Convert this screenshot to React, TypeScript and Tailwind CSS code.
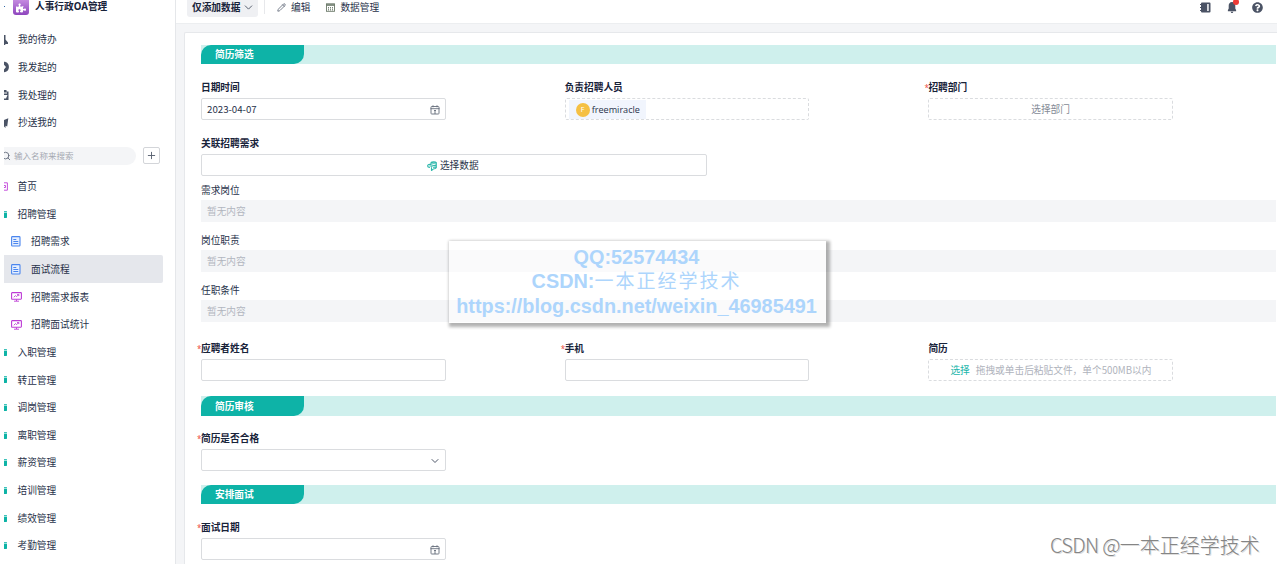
import React from 'react';
import { ChevronDown, Pencil, Plus, Search } from 'lucide-react';
import { FaPuzzlePiece, FaQuestionCircle } from 'react-icons/fa';

interface MenuItem {
  label: string;
  type: 'home' | 'folder' | 'form' | 'report';
  active?: boolean;
}

const quickLinks = ['我的待办', '我发起的', '我处理的', '抄送我的'];

const menuItems: MenuItem[] = [
  { label: '首页', type: 'home' },
  { label: '招聘管理', type: 'folder' },
  { label: '招聘需求', type: 'form' },
  { label: '面试流程', type: 'form', active: true },
  { label: '招聘需求报表', type: 'report' },
  { label: '招聘面试统计', type: 'report' },
  { label: '入职管理', type: 'folder' },
  { label: '转正管理', type: 'folder' },
  { label: '调岗管理', type: 'folder' },
  { label: '离职管理', type: 'folder' },
  { label: '薪资管理', type: 'folder' },
  { label: '培训管理', type: 'folder' },
  { label: '绩效管理', type: 'folder' },
  { label: '考勤管理', type: 'folder' },
];

const QuickIcon = ({ index }: { index: number }) => (
  <svg className="h-3 w-[5px] shrink-0 text-[#4a5365]" viewBox="0 0 5 12" fill="currentColor">
    {index === 0 && <path d="M0 1h1.500v4.500L4 8.500V10H1.300v1H0z" />}
    {index === 1 && <path d="M0 .8c3 0 4.900 2.200 4.900 5.200S3 11.200 0 11.200V8.500L2 6 0 3.800z" />}
    {index === 2 && <path d="M0 1h2.500v1.500h2V11H0V9.500h2L3.500 6H0V4.500h3V3.500H0z" />}
    {index === 3 && <path d="M4.300 1.200 3.200 9.500 1.500 8.800V11L0 9.500V3z" />}
  </svg>
);

const MenuIcon = ({ type }: { type: MenuItem['type'] }) => {
  if (type === 'home') {
    return (
      <svg className="h-[9px] w-1 shrink-0" viewBox="0 0 4 9" fill="none" stroke="#c653dc">
        <path d="M0 .8h3.400v7.400H0M0 3.500h1.500v2H0" />
      </svg>
    );
  }
  if (type === 'folder') {
    return (
      <svg className="h-[7px] w-[3px] shrink-0" viewBox="0 0 3 7">
        <path d="M0 0h2.600L3 .6v1H0z" fill="#3cc3ba" />
        <path d="M0 2h3v4.500l-.5.5H0z" fill="#0db3a6" />
      </svg>
    );
  }
  if (type === 'form') {
    return (
      <svg className="h-[11px] w-[10px] shrink-0" viewBox="0 0 10 11" fill="none" stroke="#4b86ee">
        <rect x=".6" y=".6" width="8.400" height="9.400" rx=".8" fill="#e7f0ff" strokeWidth="1.100" />
        <path d="M2.300 3.500h3M2.300 5.500h5M2.300 7.500h5" />
      </svg>
    );
  }
  return (
    <svg className="h-[10px] w-[11px] shrink-0" viewBox="0 0 11 10" fill="none" stroke="#bd3bd5">
      <rect x=".6" y=".6" width="9.800" height="6.600" rx=".6" strokeWidth="1.100" />
      <path d="m2.800 5.200 1.700-1.600 1.200 1 2-2M6 2.600h1.800v1.500M5.500 7.500V9M3 9.200h5" strokeWidth=".9" />
    </svg>
  );
};

const DateIcon = () => (
  <svg className="h-[10px] w-[10px]" viewBox="0 0 10 10" fill="none" stroke="#656d7b" strokeWidth=".9">
    <rect x="1" y="1.500" width="8" height="7.500" rx=".7" />
    <path d="M.5 3.700h9M3 .3v2M7 .3v2M4 5.500h2M5 5.500V9" />
  </svg>
);

const Banner = ({ title, className }: { title: string; className?: string }) => (
  <div className={`mr-px flex bg-[#cff0ed] ${className ?? ''}`}>
    <div className="flex w-[103px] items-center rounded-tl-[10px] rounded-br-[10px] bg-[#0eb3a7] pt-px pl-3.5 font-bold text-white">
      {title}
    </div>
  </div>
);

interface FieldProps {
  label: string;
  required?: boolean;
  dashed?: boolean;
  className?: string;
  children?: React.ReactNode;
}

const Field = ({ label, required, dashed, className, children }: FieldProps) => (
  <div className={`shrink-0 ${className ?? 'w-[244.500px]'}`}>
    <div className={`flex h-[21px] items-center pt-px font-bold text-[#18233a] ${required ? '-ml-1' : ''}`}>
      {required && <span className="w-1 text-[8px] font-normal text-[#ee5045]">*</span>}
      {label}
    </div>
    <div className={`flex h-[22px] items-center rounded-xs border border-[#dadcdf] pt-px ${dashed ? 'border-dashed' : ''}`}>
      {children}
    </div>
  </div>
);

const EmptyField = ({ label }: { label: string }) => (
  <div className="mr-px">
    <div className="flex h-5 items-center pt-px">{label}</div>
    <div className="flex h-[22px] items-center bg-[#f4f5f7] pt-px pl-1.5 text-[#b2b6bf]">暂无内容</div>
  </div>
);

const Sidebar = () => (
  <aside className="w-44 shrink-0 border-r border-[#e5e7ea] pl-1">
    <div className="overflow-hidden">
      <div className="flex h-[15px] items-start">
        <span className="mt-1.5 h-px w-px bg-[#3269a8]" />
        <div className="ml-2 flex h-[15px] w-4 items-center justify-center rounded-b-[3px] bg-linear-to-b from-[#c58be0] to-[#8e44bd]">
          <FaPuzzlePiece className="h-2.5 w-2.5 text-white" />
        </div>
        <span className="ml-1.5 text-[9.700px] leading-[14px] font-bold text-[#18233a]">人事行政OA管理</span>
      </div>

      <div className="mt-[11px]">
        {quickLinks.map((label, index) => (
          <div key={label} className="flex h-[27.65px] items-center">
            <QuickIcon index={index} />
            <span className="ml-[9px] pt-px">{label}</span>
          </div>
        ))}
      </div>

      {/* Search */}
      <div className="mt-[10px] flex h-[18px] items-center">
        <div className="flex h-[18px] w-[132px] items-center rounded-r-full bg-[#f4f5f7] text-[8.500px] text-[#a5a9b2]">
          <Search className="-ml-[3px] h-[10px] w-[10px] shrink-0 text-[#5a6373]" />
          <span className="ml-[3px] pt-px">输入名称来搜索</span>
        </div>
        <button className="ml-[7px] flex h-[17px] w-[17px] items-center justify-center rounded-xs border border-[#d3d5d9]">
          <Plus className="h-[11px] w-[11px] text-[#555e6d]" strokeWidth={2} />
        </button>
      </div>

      <div className="mt-2 w-[159px]">
        {menuItems.map((item) => {
          const nested = item.type === 'form' || item.type === 'report';
          return (
            <div
              key={item.label}
              className={`flex h-[27.65px] items-center rounded-r-xs ${item.active ? 'bg-[#e5e7ec]' : ''}`}
            >
              <div className={`flex shrink-0 ${nested ? 'w-[27px] pl-[7px]' : 'w-[13.500px]'}`}>
                <MenuIcon type={item.type} />
              </div>
              <span className="pt-px">{item.label}</span>
            </div>
          );
        })}
      </div>
    </div>
  </aside>
);

const Toolbar = () => (
  <header className="flex h-6 shrink-0 items-start border-b border-[#eceef0] bg-white pl-[11px]">
    <div className="flex h-[17px] w-[71px] items-center rounded-b-[3px] bg-[#eff0f3] pb-[2px] pl-[5px] font-bold text-[#18233a]">
      仅添加数据
      <ChevronDown className="ml-[2px] h-[13px] w-[13px] shrink-0 text-[#555e6d]" strokeWidth={1.8} />
    </div>
    <span className="ml-1.5 h-3.5 w-px bg-[#e7e8eb]" />
    <div className="ml-3 flex h-[15px] items-center">
      <Pencil className="mr-[5px] h-[9px] w-[9px] text-[#4f586a]" />
      编辑
    </div>
    <div className="ml-4 flex h-[15px] items-center">
      <svg className="mr-[5px] h-[9px] w-[9px]" viewBox="0 0 9 9" fill="none" stroke="#6a7868" strokeWidth=".9">
        <rect x=".5" y=".8" width="8" height="7.500" />
        <path d="M.5 2h8" strokeWidth="1.600" />
        <path d="M2.500 4v3.500M4.500 4v3.500M6.500 4v3.500" strokeDasharray="1.500 .6" />
      </svg>
      数据管理
    </div>
    <div className="ml-auto flex h-[15px] items-center gap-[15.500px] pr-[14px]">
      <svg className="h-[11px] w-[11px]" viewBox="0 0 11 11" fill="#4b5365">
        <path fillRule="evenodd" d="M2 .5h7.500q1 0 1 1v8q0 1-1 1H2q-1 0-1-1v-8q0-1 1-1zM7.200 2v7h1.500V2z" />
        <path d="M0 2h1.500v1H0zM0 5h1.500v1H0zM0 8h1.500v1H0z" />
      </svg>
      <div className="relative">
        <svg className="h-[11px] w-[10px]" viewBox="0 0 10 12" fill="#4b5365">
          <path d="M5 0c-2.500 0-3.600 2-3.600 4v3L.5 9v1h9V9l-.9-2V4C8.600 2 7.500 0 5 0zM3.500 10.500h3L5.700 12H4.300z" />
        </svg>
        <span className="absolute -top-[3px] left-[6px] h-[6px] w-[6px] rounded-full bg-[#ee3a36]" />
      </div>
      <FaQuestionCircle className="h-[11px] w-[11px] text-[#4b5365]" />
    </div>
  </header>
);

export default function App() {
  return (
    <div className="relative flex h-[564px] w-[1277px] overflow-hidden bg-white font-['Noto_Sans','Noto_Sans_CJK_SC',sans-serif] text-[9.700px] leading-none whitespace-nowrap text-[#28324a]">
      <Sidebar />

      <main className="flex min-w-0 flex-1 flex-col bg-[#f4f5f7]">
        <Toolbar />
        <div className="mt-2 ml-2 flex-1 rounded-tl-xs border-t border-l border-[#e6e8eb] bg-white pt-3 pl-4">
          <Banner title="简历筛选" className="h-[19px]" />

          <div className="mt-[13px] flex gap-[119.200px]">
            <Field label="日期时间">
              <span className="pl-[5px] font-['Noto_Sans_CJK_SC',sans-serif]">2023-04-07</span>
              <span className="mr-[5px] ml-auto"><DateIcon /></span>
            </Field>
            <Field label="负责招聘人员" dashed>
              <div className="ml-[3px] flex h-[19px] w-[77px] items-center bg-[#f1f5fd] pl-[7px]">
                <span className="mr-[2px] flex h-3.5 w-3.5 items-center justify-center rounded-full bg-[#f5c043] text-[7px] text-white">F</span>
                <span className="font-['Open_Sans',sans-serif] text-[9.100px]">freemiracle</span>
              </div>
            </Field>
            <Field label="招聘部门" required dashed>
              <span className="w-full text-center text-[#858b96]">选择部门</span>
            </Field>
          </div>

          <Field label="关联招聘需求" className="mt-[13px] w-[505.500px]">
            <div className="flex w-full items-center justify-center gap-[3px] pr-0.5">
              <svg className="h-[10px] w-[10px]" viewBox="0 0 10 10" fill="none" stroke="#2eb8ac" strokeWidth="1.100">
                <path d="M4 1.500C5 .6 8.500.6 9.300 1.500v5.200c-.5.800-1.800 1.200-3 1.200M4 1.500c1 .9 4.500.9 5.300 0M4.500 4c1.500.5 4 .3 4.800-.3M6 6.300c1.500 0 3-.3 3.300-.7" />
                <path d="M4 1.500v2C2.500 3 .6 3.700.6 5c0 1 1.400 1.400 2.400 1.500M2.500 4.800l3 .7M4.500 6.200v3.200L6.300 8.200" />
              </svg>
              选择数据
            </div>
          </Field>

          <div className="mt-1 space-y-2">
            <EmptyField label="需求岗位" />
            <EmptyField label="岗位职责" />
            <EmptyField label="任职条件" />
          </div>

          <div className="mt-4 flex gap-[119.200px]">
            <Field label="应聘者姓名" required />
            <Field label="手机" required />
            <Field label="简历" dashed>
              <span className="pl-[21px] text-[#19b5aa]">选择</span>
              <span className="pl-[6px] font-['Noto_Sans_CJK_SC',sans-serif] text-[#afb3bc]">拖拽或单击后粘贴文件，单个500MB以内</span>
            </Field>
          </div>

          <Banner title="简历审核" className="mt-[15px] h-5" />
          <div className="mt-3 h-11">
            <Field label="简历是否合格" required>
              <ChevronDown className="mr-1 ml-auto h-3 w-3 text-[#4f586a]" />
            </Field>
          </div>

          <Banner title="安排面试" className="mt-[13px] h-[19px]" />
          <div className="mt-[13px]">
            <Field label="面试日期" required>
              <span className="mr-[5px] ml-auto"><DateIcon /></span>
            </Field>
          </div>
        </div>
      </main>

      {/* Watermarks */}
      <div className="absolute top-[241px] left-[449px] flex h-[82px] w-[377px] flex-col items-center bg-white/50 pt-[3.500px] pr-0.5 font-['Liberation_Sans','Noto_Sans_CJK_SC',sans-serif] text-[19.850px] leading-6 font-bold text-[#add5fc] shadow-[2px_2px_3px_2px_rgba(0,0,0,0.3)]">
        <div>QQ:52574434</div>
        <div>CSDN:<span className="text-[19px] font-normal tracking-[2px]">一本正经学技术</span></div>
        <div>https://blog.csdn.net/weixin_46985491</div>
      </div>
      <div className="absolute top-[533px] left-[1050px] font-['Noto_Sans_CJK_SC',sans-serif] text-[20px] leading-6 font-light text-[#858585] [text-shadow:1px_1px_0_#ddd]">
        <span className="tracking-[-0.700px]">CSDN @</span>一本正经学技术
      </div>
    </div>
  );
}
